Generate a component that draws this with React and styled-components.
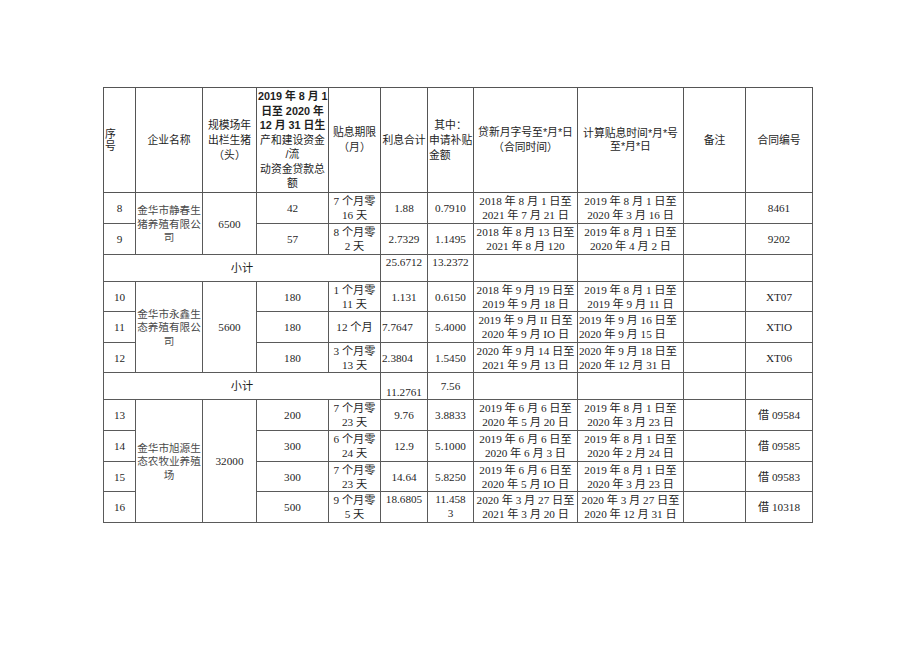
import styled, { createGlobalStyle } from "styled-components";

const GlobalStyle = createGlobalStyle`
    html, body {
        margin: 0;
        padding: 0;
        background: #ffffff;
    }
`;

const Page = styled.div`
    width: 920px;
    height: 651px;
    box-sizing: border-box;
    padding: 87px 0 0 103px;
    background: #ffffff;
`;

const Table = styled.table`
    width: 709px;
    table-layout: fixed;
    border-collapse: collapse;
    border: 1px solid #4a4a4a;
`;

const HeadCell = styled.th`
    border: 1px solid #555;
    padding: 0 1px;
    font-family: "Liberation Sans", "Noto Sans CJK SC", sans-serif;
    font-size: 10.8px;
    font-weight: normal;
    line-height: ${(p) => p.$lh || 15}px;
    color: #1e1e1e;
    text-align: ${(p) => p.$align || "center"};
    vertical-align: middle;
    white-space: pre;
    overflow: visible;
`;

const Line = styled.span`
    display: block;
    font-weight: ${(p) => (p.$bold ? "bold" : "normal")};
    text-align: ${(p) => p.$align || "inherit"};
`;

const Row = styled.tr`
    height: ${(p) => p.$h}px;
`;

const Cell = styled.td`
    border: 1px solid #5a5a5a;
    padding: 0 1px;
    font-family: "Liberation Serif", "Noto Sans CJK SC", serif;
    font-size: 11.2px;
    line-height: 14px;
    color: ${(p) => (p.$muted ? "#4a4a4a" : "#1f1f1f")};
    text-align: ${(p) => p.$align || "center"};
    vertical-align: ${(p) => p.$valign || "middle"};
    white-space: pre;
    overflow: visible;
`;

const NameCell = styled(Cell)`
    font-family: "Noto Sans CJK SC", sans-serif;
    font-size: 10.6px;
    line-height: 13.5px;
`;

const cols = [32, 67, 54, 72, 52, 47, 46, 104, 106, 62, 67];

const groups = [
    {
        name: "金华市静春生\n猪养殖有限公\n司",
        scale: "6500",
        rows: [
            ["8", "42", "7 个月零\n16 天", "1.88", "0.7910", "2018 年 8 月 1 日至\n2021 年 7 月 21 日", "2019 年 8 月 1 日至\n2020 年 3 月 16 日", "8461", 31],
            ["9", "57", "8 个月零\n2 天", "2.7329", "1.1495", "2018 年 8 月 13 日至\n2021 年 8 月 120", "2019 年 8 月 1 日至\n2020 年 4 月 2 日", "9202", 31],
        ],
        total: { interest: "25.6712", subsidy: "13.2372", iv: "top", sv: "top" },
    },
    {
        name: "金华市永鑫生\n态养殖有限公\n司",
        scale: "5600",
        rows: [
            ["10", "180", "1 个月零\n11 天", "1.131", "0.6150", "2018 年 9 月 19 日至\n2019 年 9 月 18 日", "2019 年 8 月 1 日至\n2019 年 9 月 11 日", "XT07", 30],
            ["11", "180", "12 个月", "7.7647", "5.4000", "2019 年 9 月 II 日至\n2020 年 9 月 IO 日", "2019 年 9 月 16 日至\n2020 年 9 月 15 日", "XTlO", 31, "left"],
            ["12", "180", "3 个月零\n13 天", "2.3804", "1.5450", "2020 年 9 月 14 日至\n2021 年 9 月 13 日", "2020 年 9 月 18 日至\n2020 年 12 月 31 日", "XT06", 30, "left"],
        ],
        total: { interest: "11.2761", subsidy: "7.56", iv: "bottom", sv: "middle" },
    },
    {
        name: "金华市旭源生\n态农牧业养殖\n场",
        scale: "32000",
        rows: [
            ["13", "200", "7 个月零\n23 天", "9.76", "3.8833", "2019 年 6 月 6 日至\n2020 年 5 月 20 日", "2019 年 8 月 1 日至\n2020 年 3 月 23 日", "借 09584", 31],
            ["14", "300", "6 个月零\n24 天", "12.9", "5.1000", "2019 年 6 月 6 日至\n2020 年 6 月 3 日", "2019 年 8 月 1 日至\n2020 年 2 月 24 日", "借 09585", 31],
            ["15", "300", "7 个月零\n23 天", "14.64", "5.8250", "2019 年 6 月 6 日至\n2020 年 5 月 IO 日", "2019 年 8 月 1 日至\n2020 年 3 月 23 日", "借 09583", 30],
            ["16", "500", "9 个月零\n5 天", "18.6805", "11.458\n3", "2020 年 3 月 27 日至\n2021 年 3 月 20 日", "2020 年 3 月 27 日至\n2020 年 12 月 31 日", "借 10318", 31, "center", "top"],
        ],
    },
];

function Header() {
    return (
        <Row $h={105}>
            <HeadCell $align="left" $lh={12}>{"序\n号"}</HeadCell>
            <HeadCell>企业名称</HeadCell>
            <HeadCell>{"规模场年\n出栏生猪\n（头）"}</HeadCell>
            <HeadCell $lh={14.5}>
                <Line $bold>2019 年 8 月 1</Line>
                <Line $bold>日至 2020 年</Line>
                <Line $bold>12 月 31 日生</Line>
                <Line>产和建设资金</Line>
                <Line>/流</Line>
                <Line>动资金贷款总</Line>
                <Line>额</Line>
            </HeadCell>
            <HeadCell>{"贴息期限\n（月）"}</HeadCell>
            <HeadCell>利息合计</HeadCell>
            <HeadCell>
                <Line>其中：</Line>
                <Line $align="left">申请补贴</Line>
                <Line $align="left">金额</Line>
            </HeadCell>
            <HeadCell>{"贷新月字号至*月*日\n（合同时间）"}</HeadCell>
            <HeadCell $lh={13}>{"计算贴息时间*月*号\n至*月*日"}</HeadCell>
            <HeadCell>备注</HeadCell>
            <HeadCell>合同编号</HeadCell>
        </Row>
    );
}

function Group({ group }) {
    return (
        <>
            {group.rows.map((r, i) => {
                const [no, amount, term, interest, subsidy, loan, calc, code, h, calcAlign, numValign] = r;
                return (
                    <Row key={no} $h={h}>
                        <Cell>{no}</Cell>
                        {i === 0 && (
                            <>
                                <NameCell rowSpan={group.rows.length} $muted>{group.name}</NameCell>
                                <Cell rowSpan={group.rows.length}>{group.scale}</Cell>
                            </>
                        )}
                        <Cell>{amount}</Cell>
                        <Cell>{term}</Cell>
                        <Cell $align={no === "11" || no === "12" ? "left" : "center"} $valign={numValign}>{interest}</Cell>
                        <Cell $valign={numValign}>{subsidy}</Cell>
                        <Cell>{loan}</Cell>
                        <Cell $align={calcAlign}>{calc}</Cell>
                        <Cell />
                        <Cell>{code}</Cell>
                    </Row>
                );
            })}
            {group.total && (
                <Row $h={27}>
                    <Cell colSpan={5}>小计</Cell>
                    <Cell $valign={group.total.iv}>{group.total.interest}</Cell>
                    <Cell $valign={group.total.sv}>{group.total.subsidy}</Cell>
                    <Cell />
                    <Cell />
                    <Cell />
                    <Cell />
                </Row>
            )}
        </>
    );
}

export default function App() {
    return (
        <Page>
            <GlobalStyle />
            <Table>
                <colgroup>
                    {cols.map((w, i) => (
                        <col key={i} style={{ width: w }} />
                    ))}
                </colgroup>
                <thead>
                    <Header />
                </thead>
                <tbody>
                    {groups.map((g) => (
                        <Group key={g.name} group={g} />
                    ))}
                </tbody>
            </Table>
        </Page>
    );
}
